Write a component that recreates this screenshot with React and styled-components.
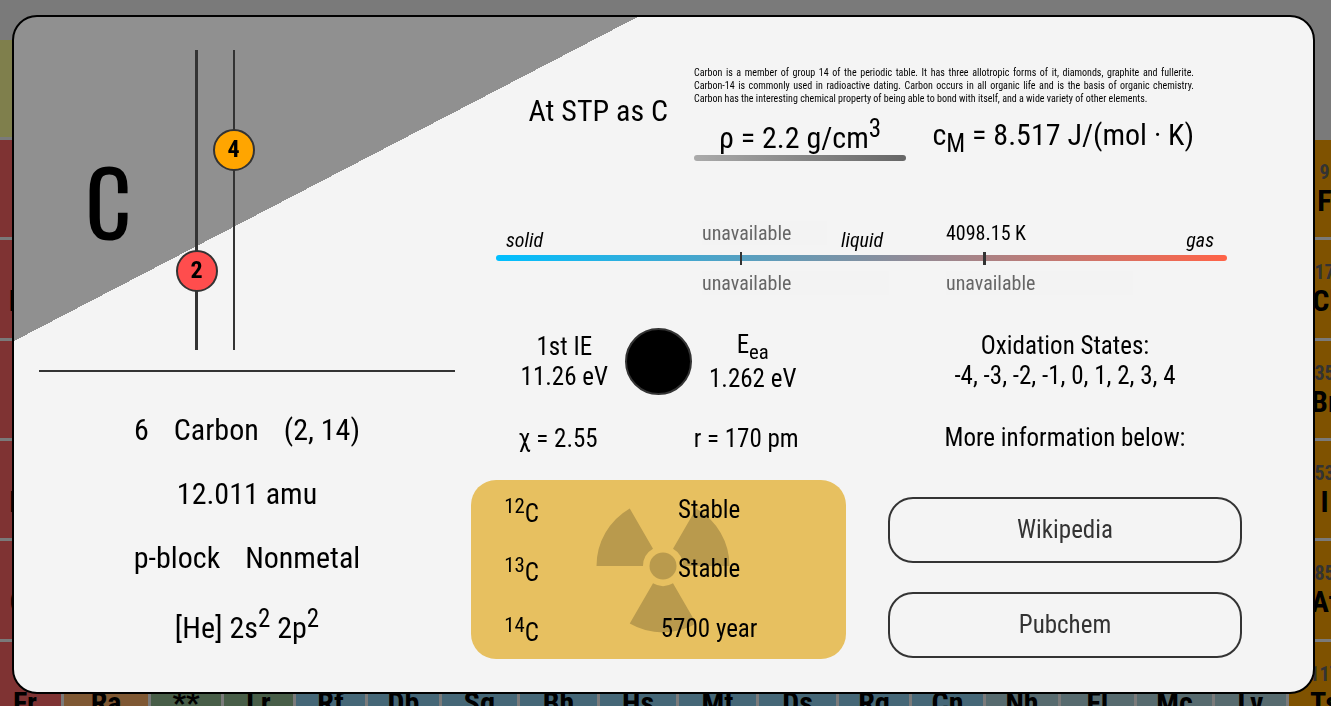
import React from "react";
import styled, { createGlobalStyle } from "styled-components";

const GlobalStyle = createGlobalStyle`
  *, *::before, *::after { box-sizing: border-box; }
  body {
    margin: 0;
    background: #f5f5f5;
    color: #000;
    font-family: "Roboto Condensed", Roboto, sans-serif;
  }
  p, h1, h2 { margin: 0; font-weight: 400; }
`;

const Page = styled.div`
  height: 100vh;
  overflow: hidden;
`;

/* Periodic table behind the dialog */

const PeriodicTable = styled.table`
  width: calc(100% + 46px);
  margin: 37px 0 0 -14px;
  table-layout: fixed;
  border-spacing: 3px;
  text-align: center;
`;

const PeriodRow = styled.tr`
  height: ${(p) => p.$height}px;
`;

const groupColors = {
  hydrogen: "#ffff99",
  alkali: "#ff6666",
  alkaline: "#ffb066",
  actinide: "#90bc90",
  transition: "#8acfee",
  poor: "#aed6de",
  halogen: "#ffa500",
};

const ElementCell = styled.td`
  padding: 20px 0 0;
  vertical-align: top;
  background: ${(p) => groupColors[p.$group]};
  font-weight: 700;
`;

const CellNumber = styled.div`
  color: #666;
  font-size: 20px;
  line-height: 24px;
`;

const CellSymbol = styled.div`
  font-size: 30px;
  line-height: 34px;
`;

/* Dialog */

const Backdrop = styled.div`
  position: fixed;
  inset: 0;
  display: flex;
  padding: 15px 16px 12px 12px;
  background: rgba(0, 0, 0, 0.5);
`;

const Card = styled.main`
  flex: 1;
  display: grid;
  grid-template-columns: 416fr 771fr;
  column-gap: 16px;
  align-items: start;
  padding: 0 71px 0 25px;
  border: 2px solid #000;
  border-radius: 25px;
  background: linear-gradient(to bottom right, #909090 24%, #f4f4f4 24%);
`;

const Identity = styled.section`
  padding-top: 33px;
`;

const Atom = styled.div`
  display: flex;
  height: 300px;
  margin-bottom: 20px;
`;

const Symbol = styled.h1`
  width: 139px;
  align-self: center;
  text-align: center;
  font-family: Oswald, "Roboto Condensed", Roboto, sans-serif;
  font-size: 90px;
  font-weight: 400;
  line-height: 120px;
`;

const Shell = styled.div`
  position: relative;
  display: flex;
  justify-content: center;
  width: 37px;
  padding-top: ${(p) => p.$drop}px;

  &::before {
    content: "";
    position: absolute;
    top: 0;
    bottom: 0;
    width: ${(p) => p.$line}px;
    background: #333;
  }
`;

const Electrons = styled.span`
  position: relative;
  flex: none;
  width: 42px;
  height: 42px;
  border: 2px solid #333;
  border-radius: 50%;
  background: ${(p) => p.$color};
  font-size: 24px;
  font-weight: 700;
  line-height: 36px;
  text-align: center;
`;

const Divider = styled.hr`
  height: 2px;
  margin: 0 0 40px;
  border: 0;
  background: #333;
`;

const Facts = styled.div`
  display: flex;
  flex-direction: column;
  gap: 29px;
  font-size: 30px;
`;

const FactRow = styled.div`
  display: flex;
  justify-content: center;
  gap: 25px;
`;

const Details = styled.section`
  padding-top: 49px;
`;

const Overview = styled.div`
  display: grid;
  grid-template-columns: 223fr 500fr 48fr;
  font-size: 30px;
`;

const StpState = styled.p`
  padding: 27px 26px 0 0;
  text-align: right;
`;

const Description = styled.p`
  font-size: 10px;
  line-height: 13px;
  text-align: justify;
`;

const Measures = styled.div`
  display: flex;
  justify-content: space-between;
  align-items: flex-start;
  padding-top: 12px;
`;

const Density = styled.p`
  width: 212px;
  line-height: 35px;
  text-align: center;

  sup { line-height: 23px; }

  &::after {
    content: "";
    display: block;
    height: 6px;
    border-radius: 3px;
    background: linear-gradient(to right, #aaa, #666);
  }
`;

const PhaseChart = styled.div`
  display: grid;
  grid-template-columns: 206fr 125fr 62fr 57fr 187fr 94fr;
  grid-template-rows: 34px 6px 34px;
  margin: 60px 15px 33px 25px;
  font-size: 20px;
`;

const Phase = styled.em`
  grid-column: ${(p) => p.$column};
  grid-row: 1;
  align-self: end;
  justify-self: ${(p) => p.$side};
  padding: 0 13px 3px ${(p) => p.$inset || 10}px;
`;

const Temperature = styled.span`
  grid-column: ${(p) => p.$column};
  grid-row: ${(p) => p.$row};
  align-self: ${(p) => (p.$row === 1 ? "start" : "end")};
  line-height: 24px;
  ${(p) => p.$missing && "color: #666; background: #f3f3f3;"}
`;

const PhaseBar = styled.div`
  grid-column: 1 / -1;
  grid-row: 2;
  display: grid;
  grid-template-columns: repeat(3, 1fr);
  align-items: center;
  border-radius: 3px;
  background: linear-gradient(to right, #00bfff, #ff6347);
`;

const PhaseTick = styled.span`
  grid-column: ${(p) => p.$column};
  width: ${(p) => p.$width}px;
  height: 13px;
  margin: -4px 0;
  background: #333;
`;

const Columns = styled.div`
  display: grid;
  grid-template-columns: 375fr 354fr;
  column-gap: 42px;
  font-size: 25px;
  line-height: 30px;
  text-align: center;
`;

const Energies = styled.div`
  display: flex;
  justify-content: center;
  align-items: center;
  gap: 17px;

  sub { line-height: 24px; }
`;

const ElementSample = styled.div`
  width: 67px;
  height: 67px;
  border: 2px solid #333;
  border-radius: 50%;
  background: #000;
`;

const Properties = styled.div`
  display: flex;
  justify-content: center;
  gap: 96px;
  margin: 29px 0 26px;
`;

const Isotopes = styled.div`
  position: relative;
  border-radius: 25px;
  background: #e7c060;
`;

const RadiationSign = styled.svg`
  position: absolute;
  top: 48%;
  left: 51%;
  width: 134px;
  height: 134px;
  margin: -67px 0 0 -66px;
  fill: #b99a4d;
`;

const IsotopeTable = styled.table`
  position: relative;
  width: 100%;
  height: 179px;
  table-layout: fixed;
  border-collapse: collapse;

  th, td {
    padding: 0;
    font-weight: 400;
  }

  th { width: 27%; }
`;

const Reference = styled.div`
  display: flex;
  flex-direction: column;
  padding-top: 3px;
`;

const MoreInfo = styled.h2`
  margin: 32px 0 44px;
  font-size: 25px;
`;

const Links = styled.nav`
  display: flex;
  flex-direction: column;
  gap: 29px;
`;

const LinkButton = styled.a`
  padding: 16px 0;
  border: 2px solid #333;
  border-radius: 25px;
  color: #333;
  text-decoration: none;
`;

const columnWidths = [72, 84, 70, 69, 69, 71, 75, 77, 76, 77, 77, 70, 71, 72, 73, 75, 71, 71];

const periods = [
  { height: 97, left: [1, "H", "hydrogen"] },
  { height: 97, left: [3, "Li", "alkali"], right: [9, "F"] },
  { height: 98, left: [11, "Na", "alkali"], right: [17, "Cl"] },
  { height: 97, left: [19, "K", "alkali"], right: [35, "Br"] },
  { height: 97, left: [37, "Rb", "alkali"], right: [53, "I"] },
  { height: 98, left: [55, "Cs", "alkali"], right: [85, "At"] },
];

const lastPeriod = [
  [87, "Fr", "alkali"], [88, "Ra", "alkaline"], ["", "**", "actinide"], [103, "Lr", "actinide"],
  [104, "Rf", "transition"], [105, "Db", "transition"], [106, "Sg", "transition"],
  [107, "Bh", "transition"], [108, "Hs", "transition"], [109, "Mt", "transition"],
  [110, "Ds", "transition"], [111, "Rg", "transition"], [112, "Cn", "transition"],
  [113, "Nh", "poor"], [114, "Fl", "poor"], [115, "Mc", "poor"], [116, "Lv", "poor"],
  [117, "Ts", "halogen"],
];

const isotopes = [
  [12, "Stable"],
  [13, "Stable"],
  [14, "5700 year"],
];

function Cell({ number, symbol, group }) {
  return (
    <ElementCell $group={group}>
      <CellNumber>{number || "\u00a0"}</CellNumber>
      <CellSymbol>{symbol}</CellSymbol>
    </ElementCell>
  );
}

export default function App() {
  return (
    <Page>
      <GlobalStyle />
      <PeriodicTable aria-hidden="true">
        <colgroup>
          {columnWidths.map((width, i) => <col key={i} width={width} />)}
        </colgroup>
        <tbody>
          {periods.map(({ height, left, right }) => (
            <PeriodRow key={left[0]} $height={height}>
              <Cell number={left[0]} symbol={left[1]} group={left[2]} />
              <td colSpan={16} />
              {right && <Cell number={right[0]} symbol={right[1]} group="halogen" />}
            </PeriodRow>
          ))}
          <PeriodRow $height={98}>
            {lastPeriod.map(([number, symbol, group]) => (
              <Cell key={symbol} number={number} symbol={symbol} group={group} />
            ))}
          </PeriodRow>
        </tbody>
      </PeriodicTable>

      <Backdrop>
        <Card>
          <Identity>
            <Atom>
              <Symbol>C</Symbol>
              <Shell $line={3} $drop={200}><Electrons $color="#ff4d4d">2</Electrons></Shell>
              <Shell $line={2} $drop={79}><Electrons $color="orange">4</Electrons></Shell>
            </Atom>
            <Divider />
            <Facts>
              <FactRow><span>6</span><span>Carbon</span><span>(2, 14)</span></FactRow>
              <FactRow><span>12.011 amu</span></FactRow>
              <FactRow><span>p-block</span><span>Nonmetal</span></FactRow>
              <FactRow><span>[He] 2s<sup>2</sup> 2p<sup>2</sup></span></FactRow>
            </Facts>
          </Identity>

          <Details>
            <Overview>
              <StpState>At STP as C</StpState>
              <div>
                <Description>
                  Carbon is a member of group 14 of the periodic table. It has three allotropic
                  forms of it, diamonds, graphite and fullerite. Carbon-14 is commonly used in
                  radioactive dating. Carbon occurs in all organic life and is the basis of organic
                  chemistry. Carbon has the interesting chemical property of being able to bond
                  with itself, and a wide variety of other elements.
                </Description>
                <Measures>
                  <Density>ρ = 2.2 g/cm<sup>3</sup></Density>
                  <p>c<sub>M</sub> = 8.517 J/(mol · K)</p>
                </Measures>
              </div>
            </Overview>

            <PhaseChart>
              <Phase $column="1" $side="start">solid</Phase>
              <Temperature $column="2" $row={1} $missing>unavailable</Temperature>
              <Phase $column="3 / 5" $side="start" $inset={14}>liquid</Phase>
              <Temperature $column="5" $row={1}>4098.15 K</Temperature>
              <Phase $column="6" $side="end">gas</Phase>
              <PhaseBar>
                <PhaseTick $column={2} $width={2} />
                <PhaseTick $column={3} $width={3} />
              </PhaseBar>
              <Temperature $column="2 / 4" $row={3} $missing>unavailable</Temperature>
              <Temperature $column="5" $row={3} $missing>unavailable</Temperature>
            </PhaseChart>

            <Columns>
              <div>
                <Energies>
                  <p>1st IE<br />11.26 eV</p>
                  <ElementSample />
                  <p>E<sub>ea</sub><br />1.262 eV</p>
                </Energies>
                <Properties>
                  <span>χ = 2.55</span>
                  <span>r = 170 pm</span>
                </Properties>
                <Isotopes>
                  <RadiationSign viewBox="-67 -67 134 134" aria-hidden="true">
                    <circle r="13.5" />
                    {[0, 120, 240].map((angle) => (
                      <path
                        key={angle}
                        transform={`rotate(${angle})`}
                        d="M-66.5 0A66.5 66.5 0 0 1-33.25-57.6L-10-17.3A20 20 0 0 0-20 0Z"
                      />
                    ))}
                  </RadiationSign>
                  <IsotopeTable>
                    <tbody>
                      {isotopes.map(([mass, halfLife]) => (
                        <tr key={mass}>
                          <th scope="row"><sup>{mass}</sup>C</th>
                          <td>{halfLife}</td>
                        </tr>
                      ))}
                    </tbody>
                  </IsotopeTable>
                </Isotopes>
              </div>
              <Reference>
                <p>Oxidation States:</p>
                <p>-4, -3, -2, -1, 0, 1, 2, 3, 4</p>
                <MoreInfo>More information below:</MoreInfo>
                <Links>
                  <LinkButton href="#wikipedia">Wikipedia</LinkButton>
                  <LinkButton href="#pubchem">Pubchem</LinkButton>
                </Links>
              </Reference>
            </Columns>
          </Details>
        </Card>
      </Backdrop>
    </Page>
  );
}
